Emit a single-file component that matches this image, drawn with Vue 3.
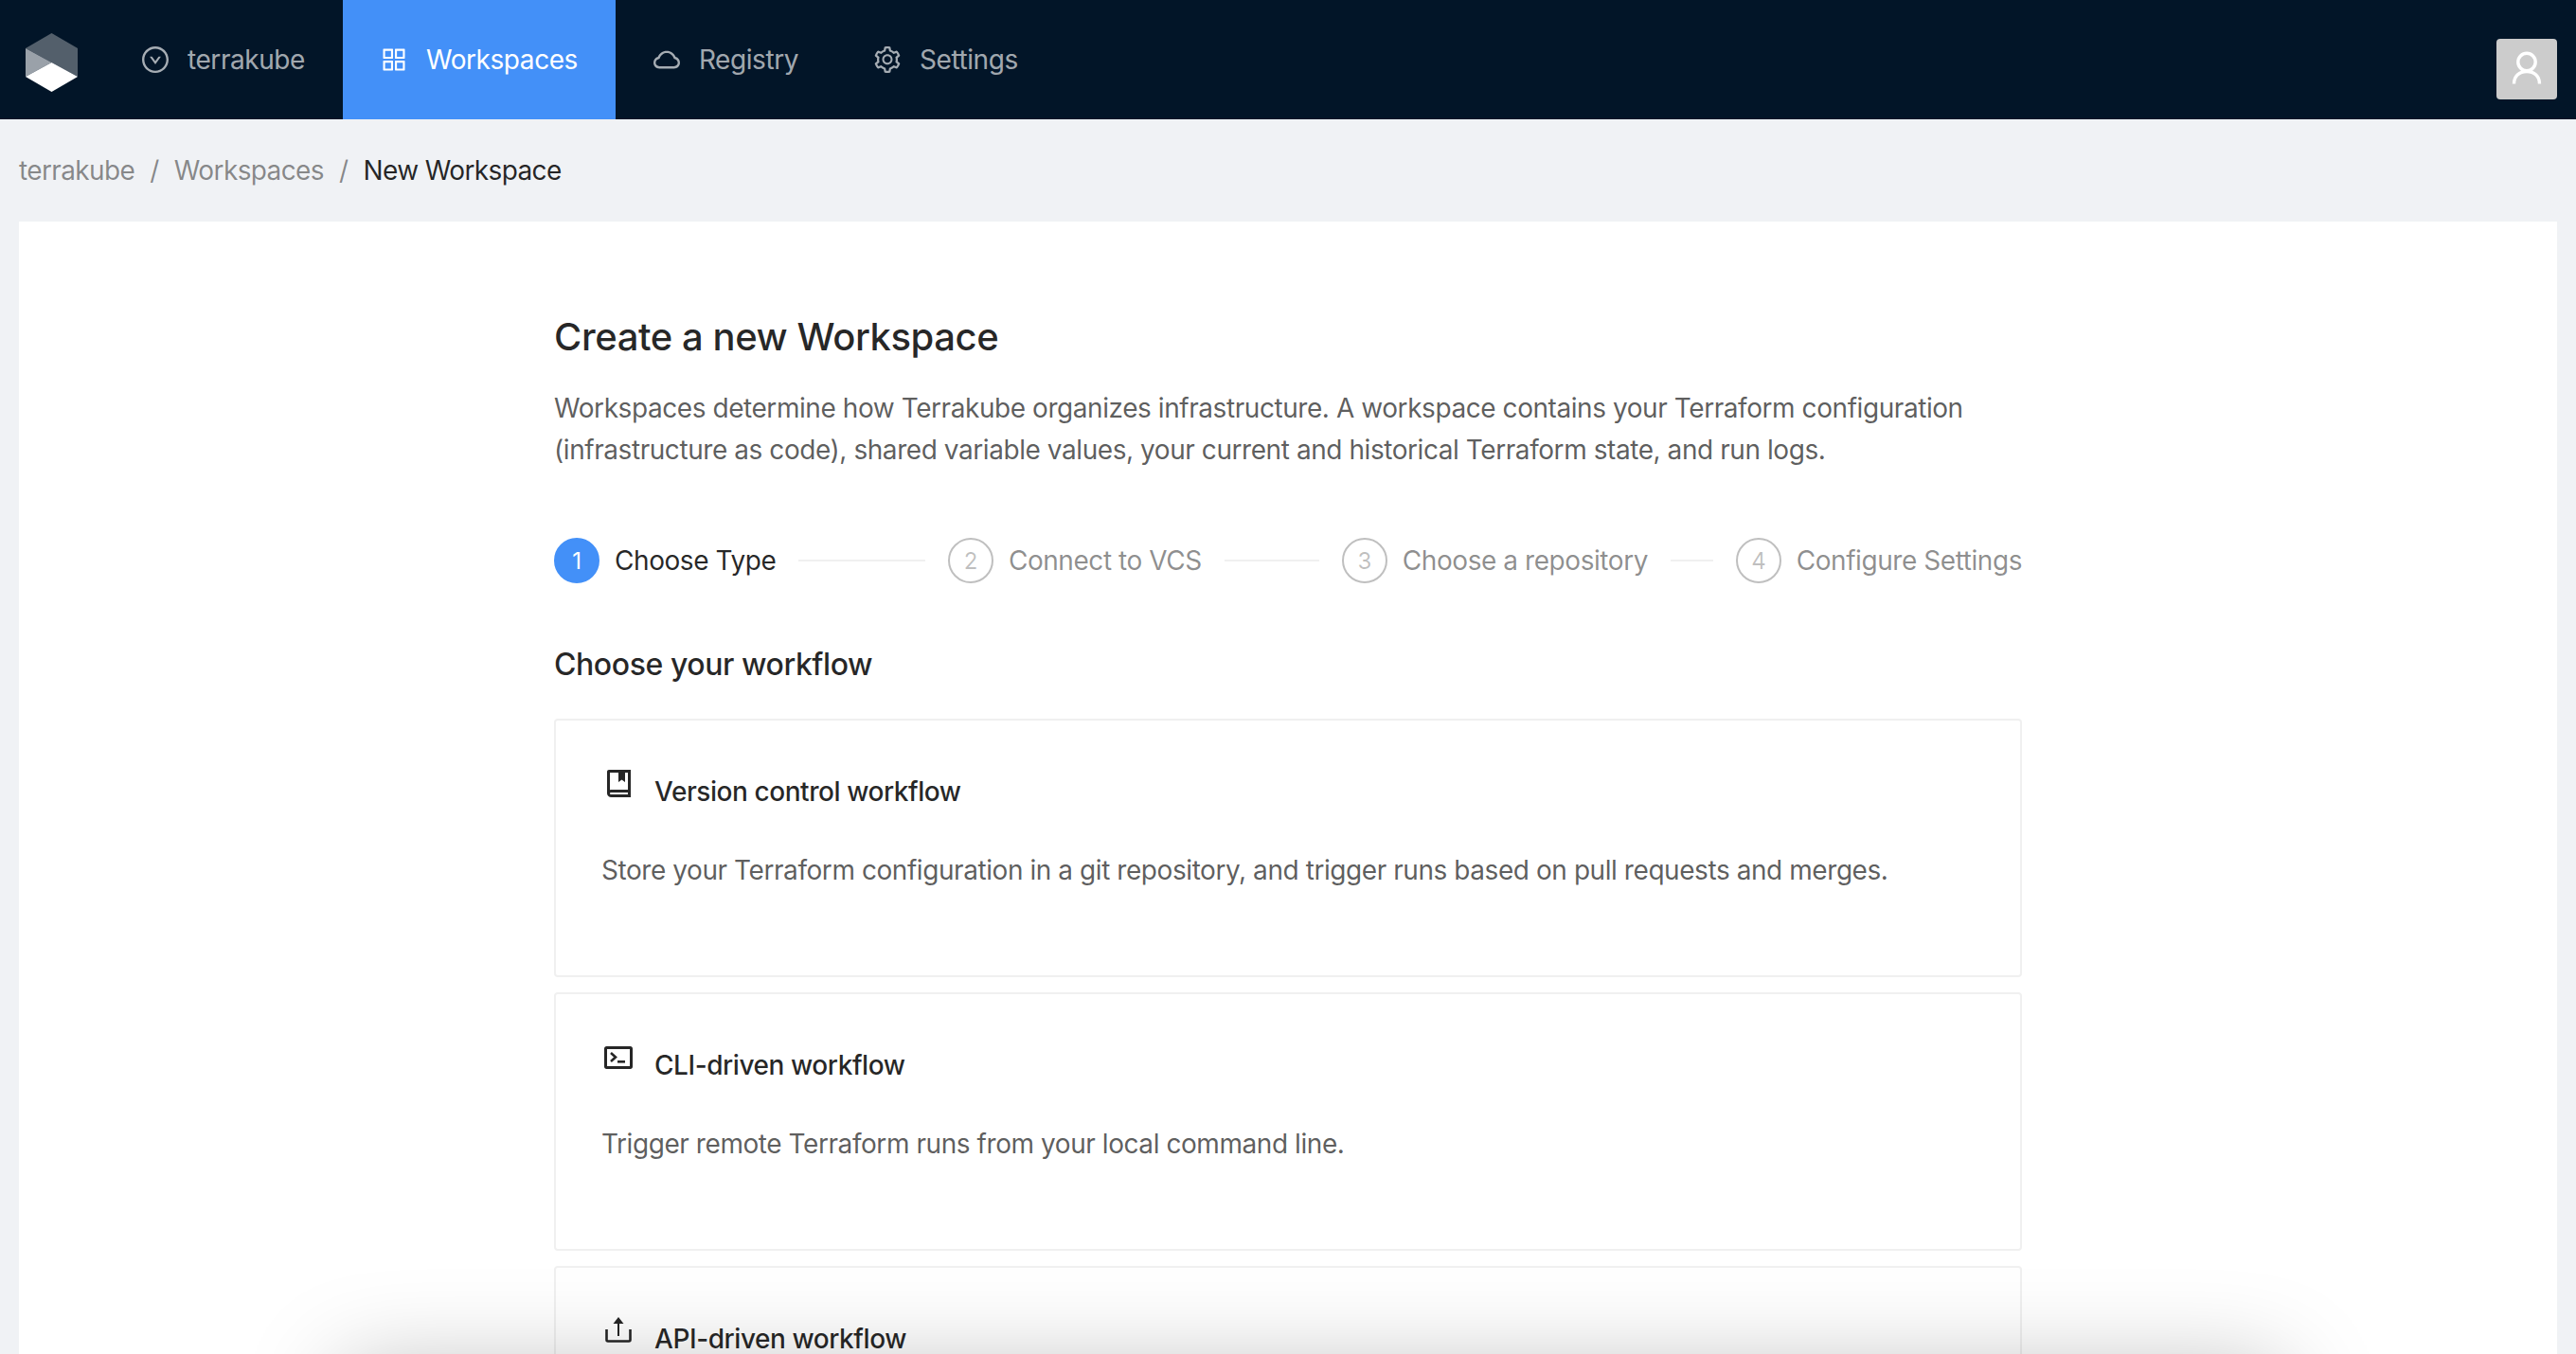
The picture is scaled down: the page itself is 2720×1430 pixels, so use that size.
<script setup>
const navItems = [
	{ label: "terrakube", icon: "org" },
	{ label: "Workspaces", icon: "apps", active: true },
	{ label: "Registry", icon: "cloud" },
	{ label: "Settings", icon: "gear" },
];

const iconPaths = {
	org: "M690 405h-46.9c-10.2 0-19.9 4.9-25.9 13.2L512 563.6 406.8 418.2c-6-8.3-15.6-13.2-25.9-13.2H334c-6.5 0-10.3 7.4-6.5 12.7l178 246c3.2 4.4 9.7 4.4 12.9 0l178-246c3.9-5.3.1-12.7-6.4-12.7zM512 64C264.6 64 64 264.6 64 512s200.6 448 448 448 448-200.6 448-448S759.4 64 512 64zm0 820c-205.4 0-372-166.6-372-372s166.6-372 372-372 372 166.6 372 372-166.6 372-372 372z",
	apps: "M464 144H160c-8.8 0-16 7.2-16 16v304c0 8.8 7.2 16 16 16h304c8.8 0 16-7.2 16-16V160c0-8.8-7.2-16-16-16zm-52 268H212V212h200v200zm452-268H560c-8.8 0-16 7.2-16 16v304c0 8.8 7.2 16 16 16h304c8.8 0 16-7.2 16-16V160c0-8.8-7.2-16-16-16zm-52 268H612V212h200v200zM464 544H160c-8.8 0-16 7.2-16 16v304c0 8.8 7.2 16 16 16h304c8.8 0 16-7.2 16-16V560c0-8.8-7.2-16-16-16zm-52 268H212V612h200v200zm452-268H560c-8.8 0-16 7.2-16 16v304c0 8.8 7.2 16 16 16h304c8.8 0 16-7.2 16-16V560c0-8.8-7.2-16-16-16zm-52 268H612V612h200v200z",
	cloud: "M811.4 418.7C765.6 297.9 648.9 212 512.2 212S258.8 297.8 213 418.6C127.3 441.1 64 519.1 64 612c0 110.5 89.5 200 199.9 200h496.2C870.5 812 960 722.5 960 612c0-92.7-63.1-170.7-148.6-193.3zm36.3 281a123.07 123.07 0 01-87.6 36.3H263.9c-33.1 0-64.2-12.9-87.6-36.3A123.3 123.3 0 01140 612c0-28 9.1-54.3 26.2-76.3a125.7 125.7 0 0166.1-43.7l37.9-9.9 13.9-36.6c8.6-22.8 20.6-44.1 35.7-63.4a245.6 245.6 0 0152.4-49.9c41.1-28.9 89.5-44.2 140-44.2s98.9 15.3 140 44.2c19.9 14 37.5 30.8 52.4 49.9 15.1 19.3 27.1 40.7 35.7 63.4l13.8 36.5 37.8 10c54.3 14.5 92.1 63.8 92.1 120 0 33.1-12.9 64.3-36.3 87.7z",
	gear: "M924.8 625.7l-65.5-56c3.1-19 4.7-38.4 4.7-57.8s-1.6-38.8-4.7-57.8l65.5-56a32.03 32.03 0 009.3-35.2l-.9-2.6a443.74 443.74 0 00-79.7-137.9l-1.8-2.1a32.12 32.12 0 00-35.1-9.5l-81.3 28.9c-30-24.6-63.5-44-99.7-57.6l-15.7-85a32.05 32.05 0 00-25.8-25.7l-2.7-.5c-52.1-9.4-106.9-9.4-159 0l-2.7.5a32.05 32.05 0 00-25.8 25.7l-15.8 85.4a351.86 351.86 0 00-99 57.4l-81.9-29.1a32 32 0 00-35.1 9.5l-1.8 2.1a446.02 446.02 0 00-79.7 137.9l-.9 2.6c-4.5 12.5-.8 26.5 9.3 35.2l66.3 56.6c-3.1 18.8-4.6 38-4.6 57.1 0 19.2 1.5 38.4 4.6 57.1L99 625.5a32.03 32.03 0 00-9.3 35.2l.9 2.6c18.1 50.4 44.9 96.9 79.7 137.9l1.8 2.1a32.12 32.12 0 0035.1 9.5l81.9-29.1c29.8 24.5 63.1 43.9 99 57.4l15.8 85.4a32.05 32.05 0 0025.8 25.7l2.7.5a449.4 449.4 0 00159 0l2.7-.5a32.05 32.05 0 0025.8-25.7l15.7-85a350 350 0 0099.7-57.6l81.3 28.9a32 32 0 0035.1-9.5l1.8-2.1c34.8-41.1 61.6-87.5 79.7-137.9l.9-2.6c4.5-12.3.8-26.3-9.3-35zM788.3 465.9c2.5 15.1 3.8 30.6 3.8 46.1s-1.3 31-3.8 46.1l-6.6 40.1 74.7 63.9a370.03 370.03 0 01-42.6 73.6L721 702.8l-31.4 25.8c-23.9 19.6-50.5 35-79.3 45.8l-38.1 14.3-17.9 97a377.5 377.5 0 01-85 0l-17.9-97.2-37.8-14.5c-28.5-10.8-55-26.2-78.7-45.7l-31.4-25.9-93.4 33.2c-17-22.9-31.2-47.6-42.6-73.6l75.5-64.5-6.5-40c-2.4-14.9-3.7-30.3-3.7-45.5 0-15.3 1.2-30.6 3.7-45.5l6.5-40-75.5-64.5c11.3-26.1 25.6-50.7 42.6-73.6l93.4 33.2 31.4-25.9c23.7-19.5 50.2-34.9 78.7-45.7l37.9-14.3 17.9-97.2c28.1-3.2 56.8-3.2 85 0l17.9 97 38.1 14.3c28.7 10.8 55.4 26.2 79.3 45.8l31.4 25.8 92.8-32.9c17 22.9 31.2 47.6 42.6 73.6L781.8 426l6.5 39.9zM512 326c-97.2 0-176 78.8-176 176s78.8 176 176 176 176-78.8 176-176-78.8-176-176-176zm79.2 255.2A111.6 111.6 0 01512 614c-29.9 0-58-11.7-79.2-32.8A111.6 111.6 0 01400 502c0-29.9 11.7-58 32.8-79.2C454 401.6 482.1 390 512 390c29.9 0 58 11.6 79.2 32.8A111.6 111.6 0 01624 502c0 29.9-11.7 58-32.8 79.2z",
};

const steps = [
	{ n: 1, label: "Choose Type", active: true },
	{ n: 2, label: "Connect to VCS" },
	{ n: 3, label: "Choose a repository" },
	{ n: 4, label: "Configure Settings" },
];

const workflows = [
	{
		icon: "book",
		title: "Version control workflow",
		text: "Store your Terraform configuration in a git repository, and trigger runs based on pull requests and merges.",
	},
	{
		icon: "terminal",
		title: "CLI-driven workflow",
		text: "Trigger remote Terraform runs from your local command line.",
	},
	{
		icon: "upload",
		title: "API-driven workflow",
	},
];
</script>

<template>
	<div class="page">
		<header class="topbar">
			<svg class="logo" viewBox="0 0 55 62" width="55" height="62">
				<polygon points="27.5,0 55,16 55,46 27.5,31 0,16" fill="#535f6b" />
				<polygon points="0,16 27.5,31 0,46" fill="#9aa1a9" />
				<polygon points="27.5,31 55,46 27.5,62 0,46" fill="#ffffff" />
			</svg>
			<nav class="menu">
				<a
					v-for="item in navItems"
					:key="item.label"
					class="menu-item"
					:class="{ active: item.active }"
				>
					<svg viewBox="64 64 896 896" width="28" height="28" fill="currentColor">
						<path :d="iconPaths[item.icon]" />
					</svg>
					<span>{{ item.label }}</span>
				</a>
			</nav>
			<div class="avatar">
				<svg viewBox="0 0 64 64" width="64" height="64" fill="none" stroke="#fff" stroke-width="3.4">
					<circle cx="32" cy="24.5" r="9.2" />
					<path d="M18.5 47.5C18.5 39.5 24 34.5 32 34.5S45.5 39.5 45.5 47.5" />
				</svg>
			</div>
		</header>

		<div class="crumbs">
			<span>terrakube</span>
			<span class="sep">/</span>
			<span>Workspaces</span>
			<span class="sep">/</span>
			<span class="current">New Workspace</span>
		</div>

		<main class="sheet">
			<div class="content">
				<h2 class="title">Create a new Workspace</h2>
				<p class="intro">
					Workspaces determine how Terrakube organizes infrastructure. A workspace contains your Terraform configuration
					(infrastructure as code), shared variable values, your current and historical Terraform state, and run logs.
				</p>

				<div class="steps">
					<div
						v-for="s in steps"
						:key="s.n"
						class="step"
						:class="{ active: s.active }"
					>
						<span class="step-num">{{ s.n }}</span>
						<span class="step-label">{{ s.label }}</span>
						<span class="step-line"></span>
					</div>
				</div>

				<h3 class="subtitle">Choose your workflow</h3>

				<div class="cards">
					<div v-for="w in workflows" :key="w.icon" class="card">
						<div class="card-head">
							<svg class="card-icon" viewBox="0 0 32 32" width="32" height="32">
								<template v-if="w.icon === 'book'">
									<path
										fill="#262626"
										fill-rule="evenodd"
										d="M6 1h23v29H8.500C6 30 4 28.300 4 26V3c0-1.200.9-2 2-2zm1 3v18.200c.5-.2 1-.2 1.500-.2H26V4h-3v10l-3.500-2.500L16 14V4H7zm1.500 21c-1 0-1.500.4-1.500 1s.5 1 1.500 1H26v-2H8.500z"
									/>
								</template>
								<template v-else-if="w.icon === 'terminal'">
									<path
										fill="#262626"
										fill-rule="evenodd"
										d="M3.500 4h25C30 4 31 5 31 6.500v19c0 1.500-1 2.500-2.500 2.500h-25C2 28 1 27 1 25.500v-19C1 5 2 4 3.500 4zM4 7v18h24V7H4z"
									/>
									<path d="M8 11l5 4.500-5 4.500" fill="none" stroke="#262626" stroke-width="2.600" />
									<rect x="15" y="19" width="8" height="2.600" fill="#262626" />
								</template>
								<template v-else>
									<path
										fill="none"
										stroke="#262626"
										stroke-width="2.600"
										d="M3.500 14v11c0 1 .5 1.500 1.500 1.500h22c1 0 1.500-.5 1.500-1.500V14"
									/>
									<path d="M16 21V6" fill="none" stroke="#262626" stroke-width="2" />
									<path d="M16 1l5.500 7h-11z" fill="#262626" />
								</template>
							</svg>
							<span class="card-title">{{ w.title }}</span>
						</div>
						<p v-if="w.text" class="card-text">{{ w.text }}</p>
					</div>
				</div>
			</div>
		</main>

		<div class="edge-shadow"></div>
	</div>
</template>

<style>
	html,
	body {
		margin: 0;
		background: #f0f2f5;
	}
</style>

<style scoped>
	.page {
		position: relative;
		display: flex;
		flex-direction: column;
		height: 100vh;
		overflow: hidden;
		background: #f0f2f5;
		font-family: Inter, "Liberation Sans", sans-serif;
		font-size: 28px;
		line-height: 44px;
		letter-spacing: -0.0155em;
		color: rgba(0, 0, 0, 0.85);
	}

	/* top bar */
	.topbar {
		display: flex;
		align-items: center;
		flex: none;
		height: 126px;
		padding: 0 20px 0 27px;
		background: #021528;
	}
	.logo {
		flex: none;
		margin: 6px 28px 0 0;
	}
	.menu {
		display: flex;
		height: 100%;
		flex: 1;
	}
	.menu-item {
		display: flex;
		align-items: center;
		gap: 20px;
		padding: 0 40px;
		color: rgba(255, 255, 255, 0.65);
	}
	.menu-item.active {
		background: #4390f8;
		color: #fff;
	}
	.avatar {
		flex: none;
		width: 64px;
		height: 64px;
		margin-top: 20px;
		border-radius: 4px;
		background: #ccc;
	}

	/* breadcrumb */
	.crumbs {
		display: flex;
		flex: none;
		gap: 16px;
		padding: 32px 20px;
		height: 44px;
		letter-spacing: -0.022em;
		color: rgba(0, 0, 0, 0.45);
	}
	.crumbs .current {
		color: rgba(0, 0, 0, 0.85);
	}

	/* white sheet */
	.sheet {
		flex: 1;
		margin: 0 20px;
		background: #fff;
	}
	.content {
		width: 1550px;
		margin: 0 auto;
		padding-top: 96px;
	}
	.title {
		margin: 0;
		font-size: 40px;
		line-height: 52px;
		font-weight: 500;
	}
	.intro {
		margin: 27px 0 0;
		color: rgba(0, 0, 0, 0.65);
	}

	/* steps */
	.steps {
		display: flex;
		margin-top: 71px;
	}
	.step {
		display: flex;
		align-items: center;
		flex: 1;
		height: 48px;
		color: rgba(0, 0, 0, 0.45);
	}
	.step:last-child {
		flex: none;
	}
	.step:last-child .step-line {
		display: none;
	}
	.step-num {
		flex: none;
		box-sizing: border-box;
		width: 48px;
		height: 48px;
		margin-right: 16px;
		border: 2px solid rgba(0, 0, 0, 0.25);
		border-radius: 50%;
		color: rgba(0, 0, 0, 0.25);
		font-size: 24px;
		line-height: 46px;
		text-align: center;
	}
	.step.active {
		color: rgba(0, 0, 0, 0.85);
	}
	.step.active .step-num {
		background: #4390f8;
		border-color: #4390f8;
		color: #fff;
	}
	.step-label {
		flex: none;
	}
	.step-line {
		flex: 1;
		height: 2px;
		margin: 0 24px;
		background: #f0f0f0;
	}

	.subtitle {
		margin: 0;
		margin-top: 64px;
		font-size: 32px;
		line-height: 44px;
		font-weight: 500;
	}

	/* workflow cards */
	.cards {
		display: flex;
		flex-direction: column;
		gap: 16px;
		margin-top: 35px;
	}
	.card {
		box-sizing: border-box;
		flex: none;
		height: 273px;
		padding: 53px 48px 0;
		border: 2px solid #f0f0f0;
		border-radius: 4px;
		background: #fff;
	}
	.card-head {
		display: flex;
		align-items: center;
		height: 44px;
		line-height: 32px;
		font-weight: 500;
	}
	.card-icon {
		flex: none;
		margin: -16px 22px 0 2px;
	}
	.card-text {
		margin: 39px 0 0;
		color: rgba(0, 0, 0, 0.65);
	}

	/* shadow from something below the fold */
	.edge-shadow {
		position: absolute;
		left: 390px;
		right: 340px;
		top: 1475px;
		height: 60px;
		box-shadow: 0 0 100px 30px rgba(0, 0, 0, 0.26);
		pointer-events: none;
	}
</style>
